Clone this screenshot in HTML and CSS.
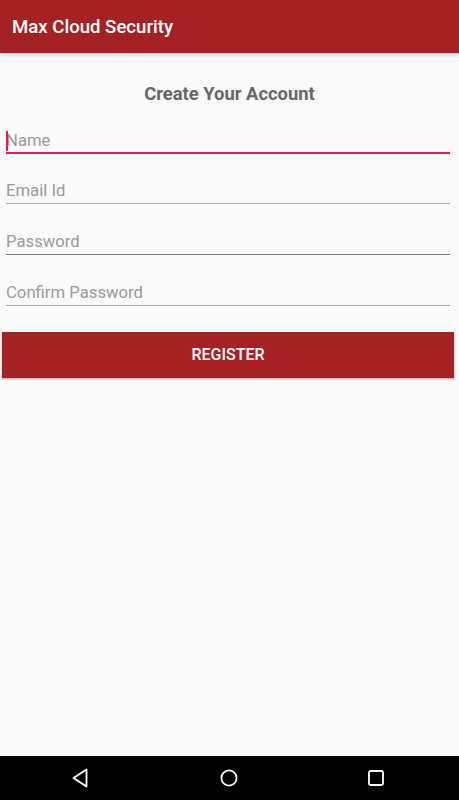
FILE: index.html
```html
<!DOCTYPE html>
<html>
<head>
<meta charset="utf-8">
<link rel="stylesheet" href="styles.css">
</head>
<body>
<div class="screen">
  <header class="appbar">Max Cloud Security</header>
  <main class="content">
    <h1 class="heading">Create Your Account</h1>
    <div class="form">
      <div class="field focused"><span class="caret"></span><span class="ph">Name</span></div>
      <div class="field"><span class="ph">Email Id</span></div>
      <div class="field dark"><span class="ph">Password</span></div>
      <div class="field"><span class="ph">Confirm Password</span></div>
    </div>
    <div class="btn">REGISTER</div>
  </main>
  <nav class="navbar">
    <svg width="20" height="20" viewBox="0 0 20 20"><path d="M15.5 1.5 L15.5 18.5 L2.5 10 Z" fill="none" stroke="#fff" stroke-width="1.8" stroke-linejoin="round"/></svg>
    <svg width="20" height="20" viewBox="0 0 20 20"><circle cx="10" cy="10" r="7.6" fill="none" stroke="#fff" stroke-width="1.8"/></svg>
    <svg width="20" height="20" viewBox="0 0 20 20"><rect x="3" y="3" width="14" height="14" rx="1.5" fill="none" stroke="#fff" stroke-width="1.8"/></svg>
  </nav>
</div>
</body>
</html>
```
FILE: styles.css
```css
* { box-sizing: border-box; }
html, body { margin: 0; padding: 0; }
body {
  width: 459px;
  height: 800px;
  background: #fafafa;
  font-family: Roboto, "Noto Sans", sans-serif;
  overflow: hidden;
}
.screen {
  height: 800px;
  display: flex;
  flex-direction: column;
}
.appbar {
  height: 53px;
  flex: none;
  background: #a52224;
  color: #fff;
  font-size: 18.6px;
  font-weight: 500;
  line-height: 54px;
  padding-left: 12px;
  box-shadow: 0 1px 4px rgba(0,0,0,0.28);
  position: relative;
  z-index: 1;
}
.content {
  flex: 1;
  display: flex;
  flex-direction: column;
}
.heading {
  margin: 30px 0 0;
  text-align: center;
  font-size: 18.4px;
  font-weight: 700;
  line-height: 22px;
  color: #666;
}
.form {
  display: flex;
  flex-direction: column;
  gap: 3px;
  padding: 0 9px 0 6px;
}
.field {
  position: relative;
  padding-top: 25px;
  padding-bottom: 2px;
  height: 48px;
  border-bottom: 1px solid #aaa;
  font-size: 16.7px;
  line-height: 20px;
  color: #9a9a9a;
}
.field.dark { border-bottom-color: #777; }
.field.focused {
  height: 49px;
  padding-top: 26px;
  border-bottom: 2px solid #f0145a;
  padding-bottom: 1px;
  margin-bottom: -1px;
}
.caret {
  position: absolute;
  left: 0;
  top: 26px;
  width: 2px;
  height: 20px;
  background: #f0145a;
}
.btn {
  margin: 26px 5px 0 2px;
  height: 46px;
  background: #a52224;
  color: #fff;
  font-size: 16px;
  font-weight: 500;
  line-height: 46px;
  text-align: center;
  box-shadow: 0 1px 2px rgba(0,0,0,0.35);
}
.navbar {
  flex: none;
  height: 44px;
  background: #000;
  display: flex;
  align-items: center;
  justify-content: space-between;
  padding: 0 73px 0 71px;
}
.navbar svg { display: block; }
```
